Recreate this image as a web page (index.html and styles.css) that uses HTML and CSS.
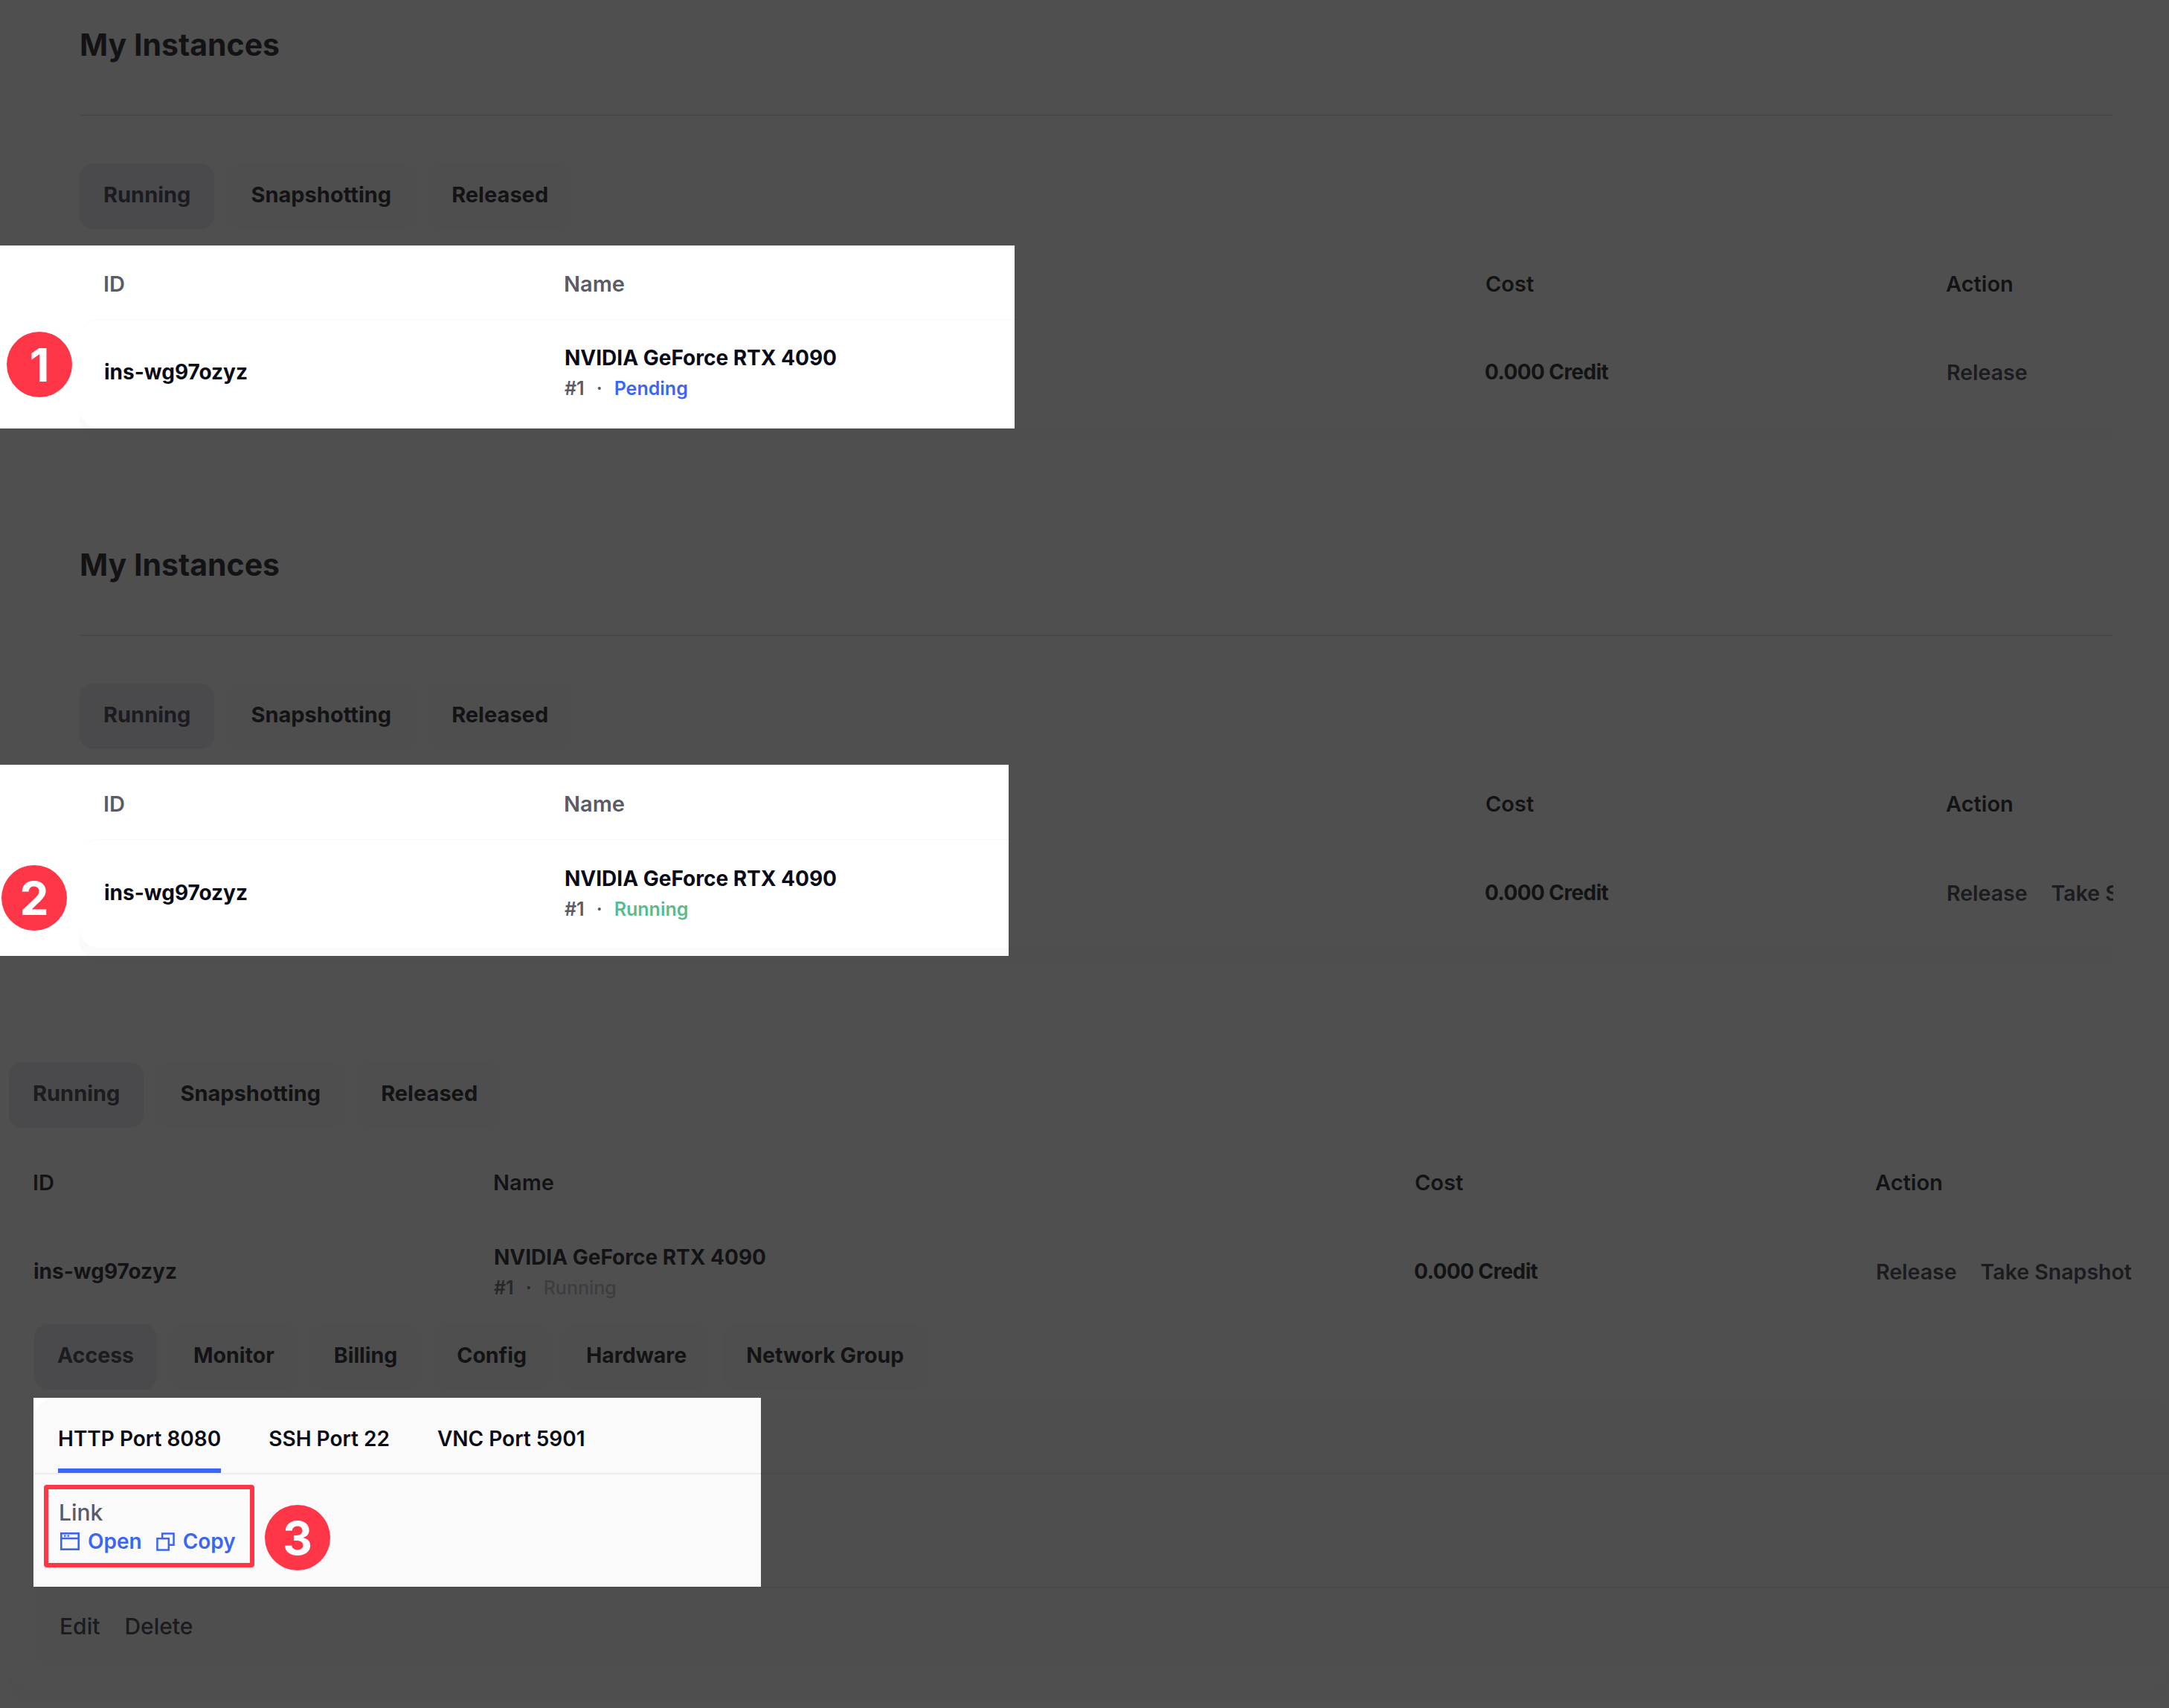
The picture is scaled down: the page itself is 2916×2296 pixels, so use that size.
FILE: index.html
```html
<!DOCTYPE html>
<html>
<head>
<meta charset="utf-8" />
<title>My Instances</title>
<link rel="stylesheet" href="styles.css">
</head>
<body>

<div class="page">

	<section class="instances first">
		<div class="head"><h1>My Instances</h1></div>
		<div class="tabs">
			<a class="tab active">Running</a>
			<a class="tab">Snapshotting</a>
			<a class="tab">Released</a>
		</div>
		<div class="cols thead">
			<div class="lit">ID</div><div class="lit">Name</div><div>Cost</div><div>Action</div>
		</div>
		<div class="card">
			<div class="cols row">
				<div class="strong">ins-wg97ozyz</div>
				<div>
					<div class="strong">NVIDIA GeForce RTX 4090</div>
					<div class="sub"><span>#1</span><i>·</i><span class="pending">Pending</span></div>
				</div>
				<div class="strong cost">0.000 Credit</div>
				<div class="actions"><a>Release</a></div>
			</div>
		</div>
	</section>

	<section class="instances second">
		<div class="head"><h1>My Instances</h1></div>
		<div class="tabs">
			<a class="tab active">Running</a>
			<a class="tab">Snapshotting</a>
			<a class="tab">Released</a>
		</div>
		<div class="cols thead">
			<div class="lit">ID</div><div class="lit">Name</div><div>Cost</div><div>Action</div>
		</div>
		<div class="card">
			<div class="cols row">
				<div class="strong">ins-wg97ozyz</div>
				<div>
					<div class="strong">NVIDIA GeForce RTX 4090</div>
					<div class="sub"><span>#1</span><i>·</i><span class="running">Running</span></div>
				</div>
				<div class="strong cost">0.000 Credit</div>
				<div class="actions"><a>Release</a><a>Take Snapshot</a></div>
			</div>
		</div>
	</section>

	<section class="instances third">
		<div class="tabs">
			<a class="tab active">Running</a>
			<a class="tab">Snapshotting</a>
			<a class="tab">Released</a>
		</div>
		<div class="cols thead">
			<div>ID</div><div>Name</div><div>Cost</div><div>Action</div>
		</div>
		<div class="card open">
			<div class="cols row">
				<div class="strong">ins-wg97ozyz</div>
				<div>
					<div class="strong">NVIDIA GeForce RTX 4090</div>
					<div class="sub"><span>#1</span><i>·</i><span class="faded">Running</span></div>
				</div>
				<div class="strong cost">0.000 Credit</div>
				<div class="actions"><a>Release</a><a>Take Snapshot</a></div>
			</div>
			<div class="tabs detail-tabs">
				<a class="tab active">Access</a>
				<a class="tab">Monitor</a>
				<a class="tab">Billing</a>
				<a class="tab">Config</a>
				<a class="tab">Hardware</a>
				<a class="tab">Network Group</a>
			</div>
			<div class="panel">
				<div class="ports">
					<a class="port on">HTTP Port 8080</a>
					<a class="port">SSH Port 22</a>
					<a class="port">VNC Port 5901</a>
				</div>
				<div class="access">
					<div class="label">Link</div>
					<div class="links">
						<a>
							<svg width="26" height="24" viewBox="0 0 26 24" fill="none" stroke="#3b66f5" stroke-width="2.6"><rect x="1.3" y="1.3" width="23.4" height="21.4"/><path d="M1 8h24"/><path d="M5 4.6h2.6M9.5 4.6h2.6" stroke-width="2.4"/></svg>
							Open
						</a>
						<a>
							<svg width="25" height="25" viewBox="0 0 26 26" fill="none" stroke="#3b66f5" stroke-width="2.6"><rect x="1.5" y="8.5" width="16" height="16"/><path d="M8.5 8.5V1.5h16v16h-7"/></svg>
							Copy
						</a>
					</div>
					<div class="mark"></div>
				</div>
				<div class="foot"><a>Edit</a><a>Delete</a></div>
			</div>
		</div>
	</section>

	<svg class="shade" width="2916" height="2296"><path fill-rule="evenodd" d="M0 0H2916V2296H0Z M0 330H1364V576H0Z M0 1028H1356V1285H0Z M45 1879H1023V2133H45Z"/></svg>

	<span class="num one">1</span>
	<span class="num two">2</span>
	<span class="num three">3</span>

</div>

</body>
</html>
```

FILE: styles.css
```css
* { padding: 0; margin: 0; box-sizing: border-box; }
a { display: block; }

body { background: #fff; font-family: Inter, "Liberation Sans", sans-serif; color: #0b0b18; }

.page { position: relative; width: 2916px; height: 2296px; overflow: hidden; }

.instances { width: 2734px; margin-left: 107px; }
.second { margin-top: 124px; }
.third { width: 2904px; margin: 154px 0 0 12px; }

.head { height: 156px; padding-top: 28px; border-bottom: 2px solid #e3e3e6; }
h1 { font-size: 41px; line-height: 64px; font-weight: 700; }

.tabs { display: flex; gap: 17px; margin-top: 64px; }
.tab { height: 88px; padding: 0 32px; line-height: 84px; border-radius: 18px; background: #f9f9f9; font-size: 29px; font-weight: 700; }
.tab.active { background: #e8ebf5; color: #2a2b40; }
.third .tabs { margin-top: 0; }

.cols { display: grid; grid-template-columns: 619px 1239px 619px 1fr; padding-left: 32px; }
.thead { height: 95px; margin-top: 26px; align-items: center; font-size: 29px; font-weight: 600; }
.thead .lit { color: #5b5b66; }

.card { height: 146px; border-radius: 26px 0 0 26px; background: #fff; border-top: 1px solid #f8f8f8; box-shadow: 0 17px 0 #fafafa; overflow: hidden; }
.card.open { height: 635px; border-radius: 30px; }

.row { height: 142px; padding-left: 33px; align-items: center; font-size: 28.5px; font-weight: 600; }
.first .row { height: 140px; }
.strong { font-size: 28px; font-weight: 700; line-height: 40px; }
.cost { margin-left: -2px; letter-spacing: -0.6px; }
.sub { display: flex; align-items: center; height: 34px; margin-top: 4px; font-size: 25px; font-weight: 600; color: #5b5b66; }
.sub i { width: 40px; text-align: center; font-style: normal; }
.pending { color: #3b66f5; }
.running { color: #57bd8c; }
.faded { color: #b4b4bc; font-weight: 500; }

.actions { display: flex; gap: 32px; white-space: nowrap; color: #2a2b40; }

.third .detail-tabs { gap: 18px; margin: 0 0 0 34px; }
.detail-tabs .tab { padding: 0 31px; font-size: 28.5px; }

.panel { height: 360px; margin: 12px 0 0 34px; border-radius: 26px; background: #fafafa; }
.ports { display: flex; gap: 64px; height: 102px; padding-left: 32px; border-bottom: 2px solid #ececec; }
.port { height: 100px; padding-top: 34px; font-size: 28px; font-weight: 600; line-height: 40px; }
.port.on { border-bottom: 6px solid #3b66f5; }

.access { position: relative; height: 153px; padding: 32px 0 0 33px; border-bottom: 2px solid #ececec; }
.label { font-size: 30px; line-height: 38px; font-weight: 500; color: #5b5b66; }
.links { display: flex; gap: 19px; padding-left: 2px; font-size: 28px; line-height: 40px; font-weight: 600; color: #3b66f5; }
.links a { display: flex; align-items: center; gap: 11px; }
.mark { position: absolute; left: 13px; top: 14px; width: 283px; height: 111px; border: 6px solid #ff3548; border-radius: 4px; }

.foot { display: flex; gap: 33px; padding: 31px 0 0 34px; font-size: 30px; line-height: 40px; font-weight: 500; color: #2a2b40; }

.shade { position: absolute; left: 0; top: 0; fill: #161616; fill-opacity: .755; }

.num { position: absolute; width: 88px; height: 88px; border-radius: 50%; background: #ff3548; color: #fff; font-size: 62px; font-weight: 700; line-height: 90px; text-align: center; }
.one { left: 9px; top: 446px; }
.two { left: 2px; top: 1163px; }
.three { left: 356px; top: 2023px; }
```
